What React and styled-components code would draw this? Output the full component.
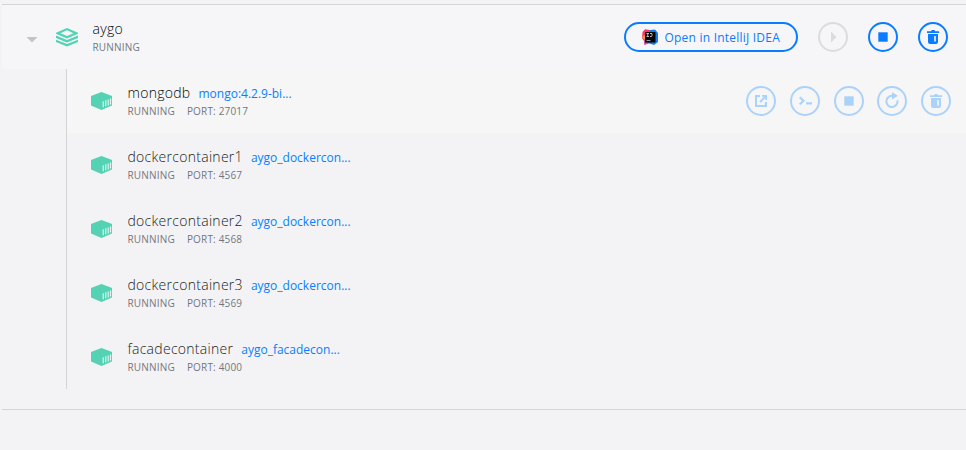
import React from "react";
import styled, { createGlobalStyle } from "styled-components";

const GlobalStyle = createGlobalStyle`
  * { box-sizing: border-box; }
  body {
    margin: 0;
    background: #f3f3f6;
    font-family: "Open Sans", sans-serif;
    overflow: hidden;
  }
`;

const Page = styled.main`
  height: 450px;
  padding: 4px 0 0 2px;
`;

const Group = styled.section`
  height: 406px;
  border-top: 1px solid #d3d4d7;
  border-bottom: 1px solid #d3d4d7;
`;

const GroupHeader = styled.header`
  display: flex;
  align-items: center;
  height: 64px;
  padding: 0 18px 0 24px;
  background: #f6f6f9;
`;

const Caret = styled.span`
  width: 12px;
  height: 6px;
  margin: 5px 17.5px 0 0;
  background: #c4c4c6;
  clip-path: polygon(0 0, 100% 0, 50% 100%);
`;

const Icon = styled.svg`
  display: block;
  flex: none;
`;

const Details = styled.div`
  display: flex;
  flex-direction: column;
  flex: 1;
  margin-left: ${({ $gap }) => $gap}px;
  padding-bottom: 1px;
`;

const TitleLine = styled.div`
  display: flex;
  align-items: baseline;
  gap: 8px;
  height: 20px;
  line-height: 20px;
  white-space: nowrap;
`;

const Name = styled.span`
  font-size: 14px;
  font-weight: 300;
  letter-spacing: 0.28px;
  color: ${({ $strong }) => ($strong ? "#050608" : "#1c1d20")};
`;

const ImageLink = styled.a`
  font-size: 12px;
  color: #087fff;
`;

const StatusLine = styled.div`
  display: flex;
  gap: 12px;
  height: 16px;
  line-height: 16px;
  font-size: 10px;
  letter-spacing: 0.18px;
  color: #73777d;
  white-space: nowrap;
`;

const Actions = styled.div`
  display: flex;
  align-items: center;
  gap: ${({ $gap }) => $gap}px;
`;

const IdeButton = styled.button`
  display: flex;
  align-items: center;
  gap: 6.5px;
  width: 174px;
  height: 30px;
  padding: 0 0 0 16px;
  border: 2px solid #0a7cff;
  border-radius: 15px;
  background: transparent;
  color: #0a7cff;
  font: 500 12px "Open Sans", sans-serif;
  letter-spacing: 0.22px;
  white-space: nowrap;
`;

const RoundButton = styled.button`
  display: grid;
  place-items: center;
  width: 30px;
  height: 30px;
  padding: 0;
  border: 2px solid currentColor;
  border-radius: 50%;
  background: transparent;
  color: ${({ $tone }) => ({ active: "#0a7cff", faded: "#abd2fb", disabled: "#dcdcde" })[$tone]};
`;

const Children = styled.div`
  margin-left: 64px;
  border-left: 1px solid #d3d4d7;
`;

const Row = styled.article`
  display: flex;
  align-items: center;
  height: 64px;
  padding: 0 15px 0 24px;
  background: ${({ $hovered }) => ($hovered ? "#f6f6f6" : "transparent")};
`;

const StackIcon = () => (
  <Icon width="22" height="20" viewBox="0 0 22 20" fill="#53d3b3">
    <path fillRule="evenodd" d="M11 1 22 5.7v1L11 11.4 0 6.7v-1ZM11 3.3 4.5 6.2 11 9.1l6.5-2.9Z" />
    <path d="M0 8.6 11 13.1 22 8.6v2.5l-11 4.4L0 11.1ZM0 12.7l11 4.4 11-4.4v2.2L11 19.4 0 14.9Z" />
  </Icon>
);

const ContainerIcon = () => (
  <Icon width="21" height="18" viewBox="0 0 21 18">
    <path d="M10.5 0 21 4v9.5L10.5 18 0 13.5V4Z" fill="#53d3b3" />
    <path d="M12.2 9.2v6M14.8 8.3v6M17.2 7.4v6M19.5 6.5v6" stroke="#e8f7f5" strokeWidth="1.1" />
  </Icon>
);

const IntelliJIcon = () => (
  <Icon width="16" height="16" viewBox="0 0 16 16">
    <path d="M.5 3 3 .3l5 .7v9L2.5 15.7 2 12 0 9Z" fill="#f43966" />
    <path d="m0 8 4-3v6l-3-1Z" fill="#ff863d" />
    <path d="m2 11 4-1 2 4-5.5 2Z" fill="#b653a2" />
    <path d="m8 1 5-.5L16 4v9l-4 3-6-2Z" fill="#147cef" />
    <path d="M3 3h10.5v10.5H3Z" fill="#050509" />
    <path d="M4.5 4.5H7M5.75 4.5v3M4.5 7.5H7M8 4.5h2v2.2q0 .8-1 .8H8" fill="none" stroke="#ddd" strokeWidth=".8" />
    <path d="M4.5 11.5h4" stroke="#bbb" strokeWidth=".8" />
  </Icon>
);

const glyphs = {
  play: <path d="M6 2.5v11l5.5-5.5Z" />,
  stop: <path d="M3.3 3.3h9.4v9.4H3.3Z" />,
  trash: (
    <path
      fillRule="evenodd"
      d="M2 2.2h4L6.8 1h2.6l.8 1.2h3.9v1.9H2ZM3 5h10v8q0 2-2 2H5Q3 15 3 13Zm6.2 2v5.5h1.6V7Z"
    />
  ),
  open: (
    <path d="M2 2h5v2.1H4v7.8h7.9V9H14v5H2ZM9 2h5v5h-1.7V5.1L7.6 9.8 6.2 8.4l4.7-4.7H9Z" />
  ),
  terminal: (
    <path d="m2 5 1.5-1.5L8 7.7l-4.5 4.2L2 10.5l3-2.8ZM9 9.2h6v2.2H9Z" />
  ),
  restart: (
    <>
      <path d="M13.4 7.2A5.6 5.6 0 1 1 8.2 2.8" fill="none" stroke="currentColor" strokeWidth="2" />
      <path d="m8-.8 6 3.6-6 3.7Z" />
    </>
  ),
};

const ActionButton = ({ icon, label, tone }) => (
  <RoundButton $tone={tone} aria-label={label} disabled={tone === "disabled"}>
    <Icon width="16" height="16" viewBox="0 0 16 16" fill="currentColor" overflow="visible">
      {glyphs[icon]}
    </Icon>
  </RoundButton>
);

const rowActions = [
  ["open", "Open in browser"],
  ["terminal", "Open terminal"],
  ["stop", "Stop"],
  ["restart", "Restart"],
  ["trash", "Delete"],
];

const containers = [
  { name: "mongodb", image: "mongo:4.2.9-bi...", port: "27017", hovered: true },
  { name: "dockercontainer1", image: "aygo_dockercon...", port: "4567" },
  { name: "dockercontainer2", image: "aygo_dockercon...", port: "4568" },
  { name: "dockercontainer3", image: "aygo_dockercon...", port: "4569" },
  { name: "facadecontainer", image: "aygo_facadecon...", port: "4000" },
];

const ContainerRow = ({ name, image, port, hovered }) => (
  <Row $hovered={hovered}>
    <ContainerIcon />
    <Details $gap={15.5}>
      <TitleLine>
        <Name $strong={hovered}>{name}</Name>
        <ImageLink>{image}</ImageLink>
      </TitleLine>
      <StatusLine>
        <span>RUNNING</span>
        <span>PORT: {port}</span>
      </StatusLine>
    </Details>
    {hovered && (
      <Actions $gap={13.75}>
        {rowActions.map(([icon, label]) => (
          <ActionButton key={icon} icon={icon} label={label} tone="faded" />
        ))}
      </Actions>
    )}
  </Row>
);

export default function App() {
  return (
    <>
      <GlobalStyle />
      <Page>
        <Group>
          <GroupHeader>
            <Caret />
            <StackIcon />
            <Details $gap={15}>
              <TitleLine>
                <Name $strong>aygo</Name>
              </TitleLine>
              <StatusLine>RUNNING</StatusLine>
            </Details>
            <Actions $gap={20}>
              <IdeButton>
                <IntelliJIcon />
                Open in IntelliJ IDEA
              </IdeButton>
              <ActionButton icon="play" label="Start" tone="disabled" />
              <ActionButton icon="stop" label="Stop" tone="active" />
              <ActionButton icon="trash" label="Delete" tone="active" />
            </Actions>
          </GroupHeader>
          <Children>
            {containers.map((item) => (
              <ContainerRow key={item.name} {...item} />
            ))}
          </Children>
        </Group>
      </Page>
    </>
  );
}
